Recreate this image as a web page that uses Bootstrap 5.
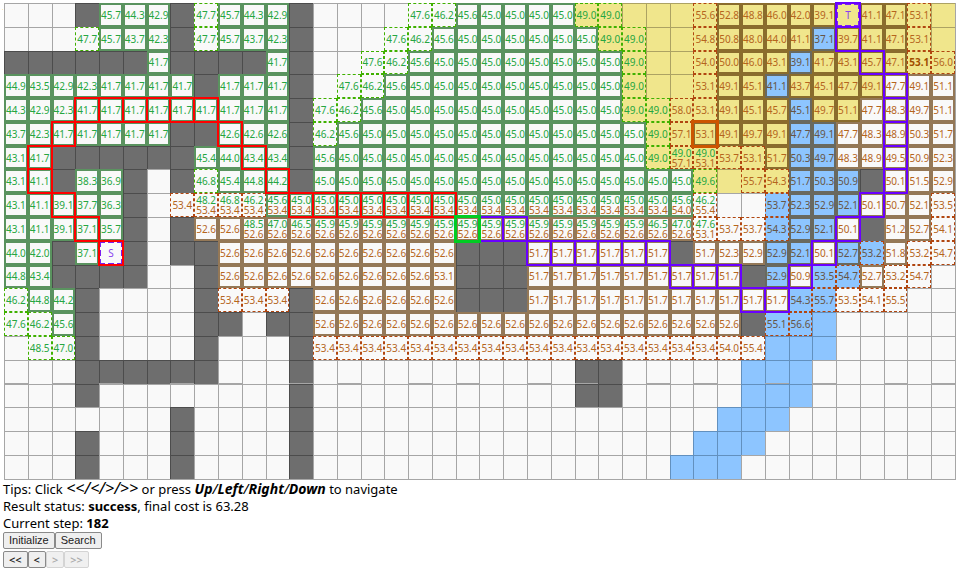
<!DOCTYPE html>
<html lang="en">
<head>
<meta charset="utf-8">
<meta name="viewport" content="width=device-width, initial-scale=1">
<title>Bidirectional path search</title>
<link href="https://cdn.jsdelivr.net/npm/bootstrap@5.3.0/dist/css/bootstrap.min.css" rel="stylesheet">
<style>
  body { font-family: "Noto Sans", "Open Sans", sans-serif; font-size: 13px; line-height: 17px; color: #000; background: #fff; }
  .page { padding: 3px 4px 2px 3px; }
  .field {
    display: grid; grid-template-columns: repeat(40, minmax(0, 1fr));
    margin-left: 1px; background: #a6a6a6;
    border-bottom: 1px solid #a6a6a6; border-right: 1px solid #a6a6a6;
    font-size: 10px; line-height: 10px;
  }
  .cell {
    --ink: #b5651d; --fwd: #26a641; --solid-fwd: #5a935f; --solid-back: #947857;
    aspect-ratio: 1; min-width: 0; min-height: 0; white-space: nowrap;
    background: #f9f9f9; border: 0 solid #a6a6a6; border-width: 1px 0 0 1px;
  }
  .t-wall { background: #6e6e6e; border-color: #4c4c4c; }
  .t-sand { background: #f0e68c; border-color: #aca263; --solid-back: #8a6c2d; }
  .t-water { background: #8dc5ff; border-color: #6290be; --ink: #665546; --solid-back: #69695f; }
  .s-g { border: 2px solid var(--solid-fwd); }
  .s-o { border: 2px solid var(--solid-back); }
  .s-G { border: 1px dashed #3fb000; }
  .s-O { border: 1px dashed #b04610; }
  .s-E { border: 2px dashed #7a1ff0; color: #8a3ff0; }
  .v-fwd { color: var(--fwd); }
  .v-back { color: var(--ink); }
  .v-last { font-weight: 700; color: #a04d00; }
  .p-red { outline: 2px solid #f00; outline-offset: -1px; z-index: 1; }
  .p-violet { outline: 2px solid #6a00ff; outline-offset: -1px; z-index: 2; }
  .p-meet { outline: 3px solid #0c2; outline-offset: -1px; z-index: 3; }
  .p-now { outline: 3px solid #cc5500; outline-offset: -1px; z-index: 3; }
  .arrow-keys { font-size: 16px; }
  .named-keys { font-size: 14px; }
  .tools { gap: 2px; }
  .tool {
    font-family: "Liberation Sans", Arial, sans-serif; font-size: 11px; line-height: 15px; height: 17px;
    padding: 0 5px; color: #222; background: #efefef; border: 1px solid #8a8a8a; border-radius: 2px;
  }
  .tool:disabled { color: #aaa; background: #f0f0f0; border-color: #d4d4d4; }
  .step { font-family: "Noto Sans", sans-serif; font-weight: 600; }
</style>
<script defer src="https://cdn.jsdelivr.net/npm/bootstrap@5.3.0/dist/js/bootstrap.bundle.min.js"></script>
</head>
<body>
<main class="page">
  <div class="field" id="field" role="group" aria-label="Search grid"></div>
  <p class="m-0">Tips: Click <i class="arrow-keys">&lt;&lt;/&lt;/&gt;/&gt;&gt;</i> or press <i class="named-keys"><b>Up</b>/<b>Left</b>/<b>Right</b>/<b>Down</b></i> to navigate</p>
  <p class="m-0">Result status: <b>success</b>, final cost is 63.28</p>
  <p class="m-0">Current step: <b>182</b></p>
  <div class="tools d-flex flex-column">
    <div class="d-flex">
      <button type="button" class="tool">Initialize</button>
      <button type="button" class="tool">Search</button>
    </div>
    <div class="d-flex">
      <button type="button" class="tool step">&lt;&lt;</button>
      <button type="button" class="tool step">&lt;</button>
      <button type="button" class="tool step" disabled>&gt;</button>
      <button type="button" class="tool step" disabled>&gt;&gt;</button>
    </div>
  </div>
</main>
<script>
  // Ground: . open, # wall, y sand, b water
  const ground = [
    "...#...#....#...........yyyyyyyyyyyyyyyy",
    ".......#....#............yyyyyyyyybyyyyy",
    "######.####.#.............yyyyyyybyyyyyy",
    "........#...#.............yyyyyybyyyy...",
    "............#.............yyyyyyybyy....",
    ".......##...#..............yyyyyybb.....",
    "..######....#..............yyyyyybb.....",
    "..#..#.#....#................yyyybbb#...",
    ".....#..........................bbbb....",
    ".....#.#........................bbb.#...",
    "..#..#.##..........###......#...bb.bb...",
    "..####..#..........###.........#b.bb....",
    "...#....#...#......###...........bb.....",
    "...#....##.##..................#bbb.....",
    "...#....#...#...................bbb.....",
    "...######...#...........##.....bbb......",
    "...#........#...........##.....bbb......",
    ".......#....#.................bbb.......",
    "...#...#....#................bbb........",
    "...#...#....#...............bbb........."
  ];
  // Costs: g/o closed forward/backward, G/O open forward/backward, E endpoint, - none, *n repeats
  const costs = [
    "-*4 g45.7 g44.3 g42.9 - G47.7 g45.7 g44.3 g42.9 -*5 G47.6 G46.2 g45.6 g45.0*4 G49.0*2 -*3 O55.6 o52.8 o48.8 o46.0 o42.0 o39.1 ET o41.1 o47.1 O53.1 -",
    "-*3 G47.7 g45.7 g43.7 g42.3 - G47.7 g45.7 g43.7 g42.3 -*4 G47.6 G46.2 g45.6 g45.0*6 G49.0*2 -*2 O54.8 o50.8 o48.0 o44.0 o41.1 o37.1 o39.7 o41.1 o47.1 O53.1 -",
    "-*6 g41.7 -*4 g41.7 -*3 G47.6 G46.2 g45.6 g45.0*8 G49.0 -*2 O54.0 o50.0 o46.0 o43.1 o39.1 o41.7 o43.1 o45.7 o47.1 O53.1! O56.0",
    "g44.9 g43.5 g42.9 g42.3 g41.7*4 - g41.7*3 -*2 G47.6 G46.2 g45.6 g45.0*9 G49.0 -*2 O53.1 o49.1 o45.1 o41.1 o43.7 o45.1 o47.7 o49.1 o47.7 o49.1 o51.1",
    "g44.3 g42.9 g42.3 g41.7*9 - G47.6 G46.2 g45.6 g45.0*10 G49.0*2 O58.0 O53.1 o49.1 o45.1 o45.7 o45.1 o49.7 o51.1 o47.7 o48.3 o49.7 o51.1",
    "g43.7 g42.3 g41.7*5 -*2 g42.6*3 - G46.2 g45.6 g45.0*12 G49.0 O57.1 o53.1 o49.1 o49.7 o49.1 o47.7 o49.1 o47.7 o48.3 o48.9 o50.3 o51.7",
    "g43.1 g41.7 -*6 g45.4 g44.0 g43.4*2 - g45.6 g45.0*13 G49.0 O49.0/57.1 O49.0/53.1 O53.7 O53.1 o51.7 o50.3 o49.7 o48.3 o48.9 o49.5 o50.9 o52.3",
    "g43.1 g41.1 - g38.3 g36.9 -*3 G46.8 g45.4 g44.8 g44.2 - g45.0*16 G49.6 - O55.7 O54.3 o51.7 o50.3 o50.9 - o50.1 o51.5 o52.9",
    "g43.1 g41.1 g39.1 g37.7 g36.3 -*2 O53.4 O48.2/53.4 O46.8/53.4 O46.2/53.4 g45.6/53.4 g45.0/53.4*16 g45.6/54.0 O46.2/55.4 -*2 O53.7 o52.3 o52.9 o52.1 o50.1 o50.7 o52.1 O53.5",
    "g43.1 g41.1 g39.1 g37.1 g35.7 -*3 o52.6*2 o48.5/52.6 o47.0/52.6 o46.5/52.6 o45.9/52.6*14 o46.5/52.6 o47.0/52.6 O47.6/53.1 O53.7*2 O54.3 o52.9 o52.1 o50.1 - o51.2 o52.7 O54.1",
    "g44.0 g42.0 - g37.1 ES -*4 o52.6*10 -*3 o51.7*6 - o51.7 o52.3 o52.9 o52.9 o52.1 o50.1 o52.7 O53.2 o51.8 O53.2 O54.7",
    "g44.8 g43.4 -*7 o52.6*9 o53.1 -*3 o51.7*9 - o52.9 o50.9 O53.5 O54.7 o52.7 O53.2 O54.7 -",
    "G46.2 g44.8 g44.2 -*6 O53.4*3 - o52.6*6 -*3 o51.7*11 O54.3 O55.7 O53.5 O54.1 O55.5 -*2",
    "G47.6 G46.2 g45.6 -*10 o52.6*18 - O55.1 O56.6 -*6",
    "- G48.5 G47.0 -*10 O53.4*17 O54.0 O55.4 -*8",
    "-*40", "-*40", "-*40", "-*40", "-*40"
  ];
  // Highlighted cells as row,firstColumn,lastColumn
  const marks = {
    red: [[4,3,8],[5,2,2],[6,1,1],[7,1,1],[8,2,2],[9,3,3],[10,4,4],[5,9,9],[6,10,10],[7,11,11],[8,12,18]],
    violet: [[9,20,21],[10,22,27],[11,28,30],[12,31,32],[11,33,33],[10,34,34],[9,35,35],[8,36,36],
             [7,37,37],[6,37,37],[5,37,37],[4,37,37],[3,37,37],[2,36,36],[1,35,35],[0,35,35]],
    meet: [[9,19,19]],
    now: [[5,29,29]]
  };
  const kinds = { "#": "t-wall", y: "t-sand", b: "t-water" };
  const field = document.getElementById("field");

  function addValue(cell, text, kind) {
    const span = document.createElement("span");
    if (text.endsWith("!")) { kind += " v-last"; text = text.slice(0, -1); }
    span.className = kind;
    span.textContent = text;
    cell.append(span);
  }

  costs.forEach((line, r) => {
    const tokens = line.split(" ").flatMap(t => {
      const [value, n] = t.split("*");
      return Array(Number(n || 1)).fill(value);
    });
    tokens.forEach((token, c) => {
      const cell = document.createElement("div");
      cell.className = "cell d-flex flex-column align-items-center justify-content-center";
      const kind = kinds[ground[r][c]];
      if (kind) cell.classList.add(kind);
      if (token !== "-") {
        const state = token[0], values = token.slice(1).split("/");
        cell.classList.add("s-" + state);
        if (values.length === 2) {
          addValue(cell, values[0], "v-fwd");
          addValue(cell, values[1], "v-back");
        } else {
          addValue(cell, values[0], state === "E" ? "v-end" : /g/i.test(state) ? "v-fwd" : "v-back");
        }
      }
      field.append(cell);
    });
  });
  for (const [name, runs] of Object.entries(marks))
    for (const [r, from, to] of runs)
      for (let c = from; c <= to; c++) field.children[r * 40 + c].classList.add("p-" + name);
</script>
</body>
</html>
